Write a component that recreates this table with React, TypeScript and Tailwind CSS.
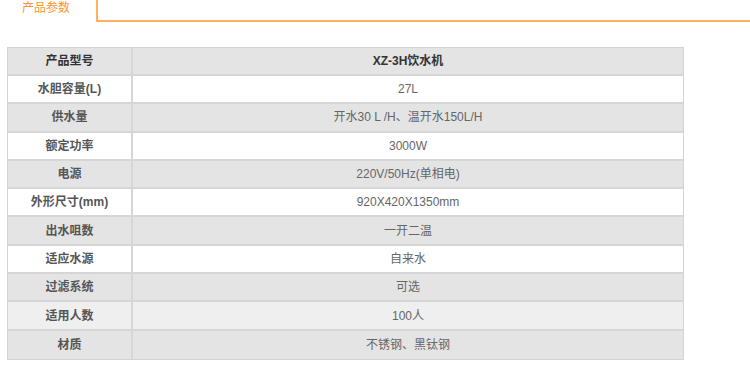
const rows: [string, string, string][] = [
  ["水胆容量(L)", "27L", "bg-white"],
  ["供水量", "开水30 L /H、温开水150L/H", "bg-[#e4e4e4]"],
  ["额定功率", "3000W", "bg-white"],
  ["电源", "220V/50Hz(单相电)", "bg-[#e4e4e4]"],
  ["外形尺寸(mm)", "920X420X1350mm", "bg-white"],
  ["出水咀数", "一开二温", "bg-[#e4e4e4]"],
  ["适应水源", "自来水", "bg-white"],
  ["过滤系统", "可选", "bg-[#e4e4e4]"],
  ["适用人数", "100人", "bg-[#efefef]"],
  ["材质", "不锈钢、黑钛钢", "bg-[#e4e4e4]"],
];

export default function App() {
  return (
    <div
      className="w-[750px] h-[385px] bg-white overflow-hidden"
      style={{ fontFamily: '"Liberation Sans", "Noto Sans CJK SC", sans-serif' }}
    >
      <div className="flex h-[22px]">
        <div className="w-[96px] pl-[22px] pt-[1px] text-[12px] leading-[14px] text-[#ff9433]">
          产品参数
        </div>
        <div className="flex-1 border-l-2 border-b-2 border-[#ffb05c]" />
      </div>

      <div className="ml-[7px] mt-[25px] w-[677px] border border-[#d3d3d3]">
        <div className="flex h-[28px] bg-[#e4e4e4] border-b-2 border-[#d6d6d6]">
          <div className="w-[125px] border-r-2 border-[#d6d6d6] flex items-center justify-center text-[12px] font-bold text-[#333]">
            产品型号
          </div>
          <div className="flex-1 flex items-center justify-center text-[12px] font-bold text-[#333]">
            XZ-3H饮水机
          </div>
        </div>
        {rows.map(([k, v, bg], i) => (
          <div
            key={k}
            className={`flex h-[28.3px] ${bg} ${i < rows.length - 1 ? "border-b-2 border-[#d6d6d6]" : ""}`}
          >
            <div className="w-[125px] border-r-2 border-[#d6d6d6] flex items-center justify-center text-[12px] font-bold text-[#555]">
              {k}
            </div>
            <div className="flex-1 flex items-center justify-center text-[12px] text-[#666]">
              {v}
            </div>
          </div>
        ))}
      </div>
    </div>
  );
}
